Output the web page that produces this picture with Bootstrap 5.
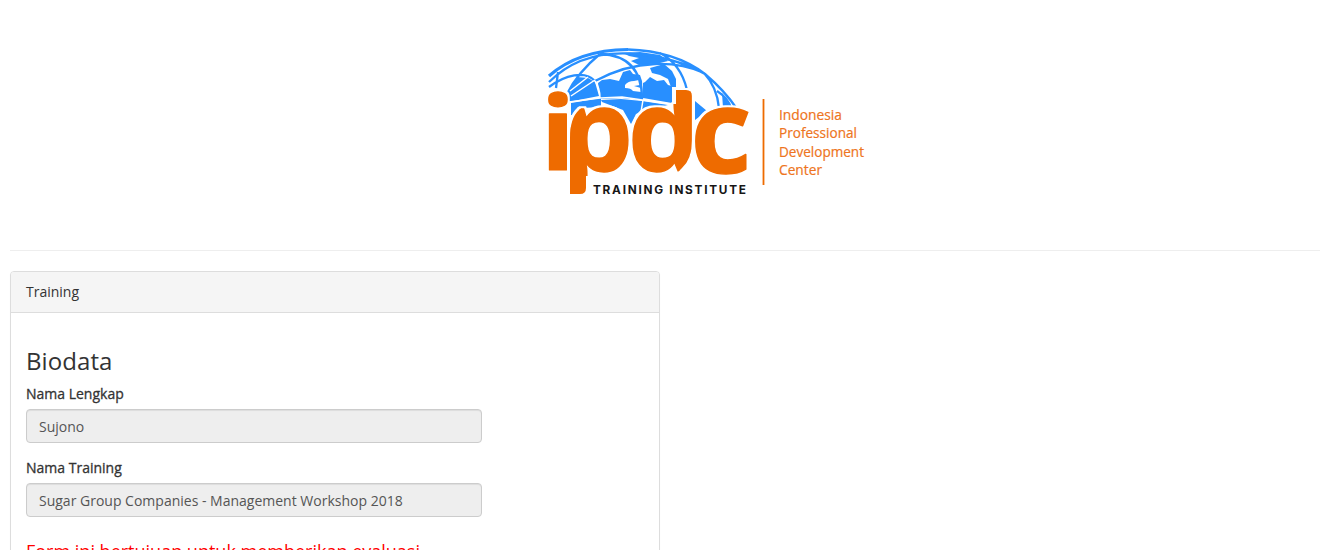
<!DOCTYPE html>
<html lang="id">
<head>
<meta charset="utf-8">
<meta name="viewport" content="width=device-width, initial-scale=1">
<title>IPDC Training Institute</title>
<link href="https://cdn.jsdelivr.net/npm/bootstrap@5.3.0/dist/css/bootstrap.min.css" rel="stylesheet">
<style>
html{overflow:hidden}
body{font-family:"Open Sans",sans-serif;font-size:14px;line-height:20px;color:#333;background:#fff;overflow:hidden}
.page{padding:40px 1px 0 10px}
.logo-wrap{padding-left:530px;height:210px}
.rule{border-top:1px solid #eee;opacity:1;margin:0 0 20px;color:#eee}
.panel{width:650px;border:1px solid #ddd;border-radius:4px;box-shadow:0 1px 1px rgba(0,0,0,.05)}
.panel .card-header{background:#f5f5f5;border-color:#ddd;padding:10px 15px;border-radius:3px 3px 0 0}
.panel .card-body{padding:35px 15px 15px}
.title{font-size:24px;line-height:26px;font-weight:400;margin:0 0 10px;letter-spacing:.08px}
.form-label{-webkit-text-stroke:.3px #333;margin:0 0 5px;display:block}
.field{width:456px;height:34px;font-size:14px;line-height:20px;padding:6px 12px;border:1px solid #ccc;border-radius:4px;color:#555;box-shadow:inset 0 1px 1px rgba(0,0,0,.075)}
.field:disabled{background:#eee;color:#555}
.group{margin-bottom:15px}
.notice{color:red;font-size:18px;line-height:20px;margin-top:24px}
</style>
</head>
<body>
<main class="page">
<div class="logo-wrap">
<svg class="d-block" width="340" height="160" viewBox="540 40 340 160" role="img" aria-label="IPDC Training Institute">
<defs>
<clipPath id="cp"><path d="M570 138Q570 118 579 110L590 100h42v76h-46v12q0 6-6 6h-10z"/></clipPath>
<clipPath id="cd"><path d="M630 176v-72h46V90h10q6 0 6 6v44Q692 159 682 168L674 176z"/></clipPath>
<filter id="halo" filterUnits="userSpaceOnUse" x="540" y="80" width="220" height="120" color-interpolation-filters="sRGB"><feMorphology in="SourceAlpha" operator="dilate" radius="2"/><feComponentTransfer result="h"><feFuncR type="table" tableValues="1 1"/><feFuncG type="table" tableValues="1 1"/><feFuncB type="table" tableValues="1 1"/></feComponentTransfer><feMerge><feMergeNode in="h"/><feMergeNode in="SourceGraphic"/></feMerge></filter>
</defs>
<g fill="#288fff">
<path d="M598 83l4-3 8-1 9 2 4-9 7-2 3 4 7 1 2 6 1 19-21-2-22 1z"/>
<path d="M601 100l20-1 21 2 26 4-20 4-12 5-5 10-8-14-21-8z"/>
<path d="M643 83l2-1 5-5 7 4 7-1 4 5 4 1v17l-29-5z"/>
<path d="M650 68l14-4 8 7 4 8v8h-5l-3-8-8-4-8-2z"/>
<path d="M623 53l17-1 20 3 8 6-8 2-21 2-8-4 8-3-10-2z"/>
<path d="M568 91l9-14 11 1 7 4 4 14-31 6zM571 103l30-5v9l-19 1-8 7h-3z"/>
<path d="M695 101l12 10-12 9zM722 93l9 15h-8z"/>
</g>
<path fill="#fff" d="M625 85q3-4 9-4l5-1 1 5-6 1 7 2v4l-8-1q-2-3-8-3z"/>
<g fill="none" stroke="#288fff" stroke-width="2.3">
<path stroke-width="3.2" d="M549 76Q578 50 628 49.500"/>
<path d="M628 49.500Q675 51 705 74Q725 91 737 109M549 82Q580 51 630 53.500Q676 57 705 74M549 87C565 75 585 70 595 81M556 88l2-16M567 94Q578 72 600 54M600 54C628 55 642 70 642 99M595 81Q625 65 655 64Q682 63 704 73M660 53Q681 64 687 90M704 73Q717 87 719 108M717 91Q728 98 731 108"/>
</g>
<path fill="none" stroke="#fff" stroke-width="1.500" d="M570 91l18-14M571 96l24-16M569 102l31-4 22-1 48 7M595 81Q600 88 600 98M643 100l-2 12"/>
<g filter="url(#halo)" font-family="Open Sans" font-weight="700" font-size="121" stroke-linejoin="round" fill="#ee6b00" stroke="#ee6b00" stroke-width="1.5">
<text transform="translate(540.8 169.500) scale(.93 .84)">i</text>
<g clip-path="url(#cp)"><text transform="translate(561 170.500) scale(.94 .94)">p</text></g>
<g clip-path="url(#cd)"><text transform="translate(628 170.500) scale(.94 .94)">d</text></g>
<text transform="translate(690.500 173) scale(.98 .96)">c</text>
</g>
<text x="593" y="194" font-family="Inter" font-weight="700" font-size="11.800" textLength="153" lengthAdjust="spacing" fill="#161616">TRAINING INSTITUTE</text>
<path d="M763.5 99v86" stroke="#ee6b00" stroke-width="1.8"/>
<g font-family="Open Sans" font-size="14" fill="#ee7420" stroke="#ee7420" stroke-width=".2">
<text x="779" y="119.500" textLength="63" lengthAdjust="spacingAndGlyphs">Indonesia</text>
<text x="779" y="138" textLength="78" lengthAdjust="spacingAndGlyphs">Professional</text>
<text x="779" y="156.500" textLength="85" lengthAdjust="spacingAndGlyphs">Development</text>
<text x="779" y="175" textLength="43" lengthAdjust="spacingAndGlyphs">Center</text>
</g>
</svg>
</div>
<hr class="rule">
<section class="card panel">
<div class="card-header">Training</div>
<div class="card-body">
<h3 class="title">Biodata</h3>
<div class="group"><label class="form-label" for="nama">Nama Lengkap</label><input id="nama" class="form-control field" value="Sujono" disabled></div>
<div class="group"><label class="form-label" for="training">Nama Training</label><input id="training" class="form-control field" value="Sugar Group Companies - Management Workshop 2018" disabled></div>
<div class="notice">Form ini bertujuan untuk memberikan evaluasi</div>
</div>
</section>
</main>
<script src="https://cdn.jsdelivr.net/npm/bootstrap@5.3.0/dist/js/bootstrap.bundle.min.js"></script>
</body>
</html>
